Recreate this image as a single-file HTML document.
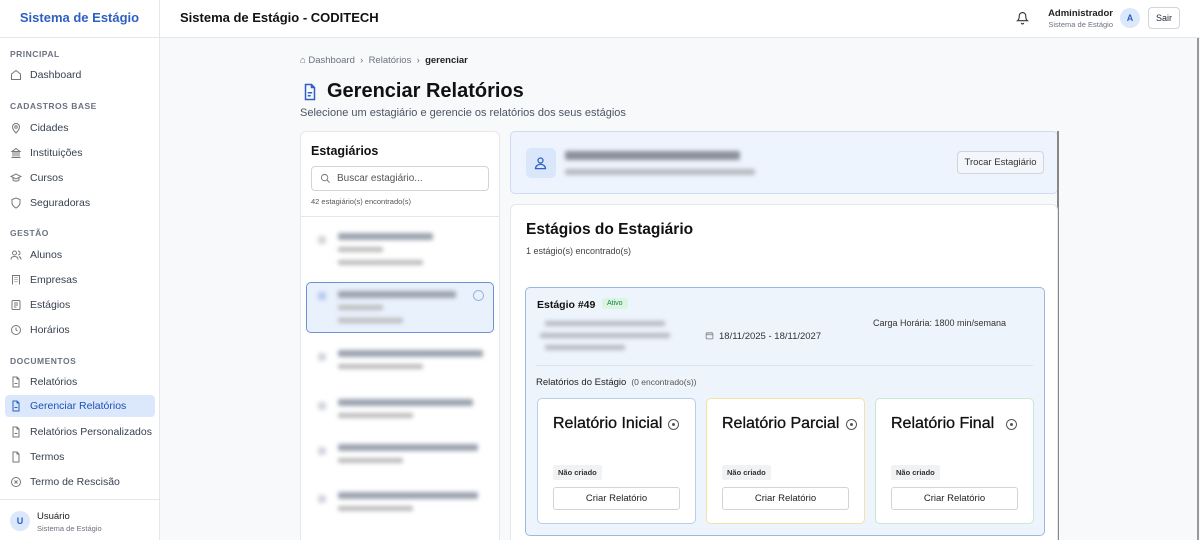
<!DOCTYPE html>
<html style="width:1200px;height:540px;overflow:hidden"><head><meta charset="utf-8"><style>
*{box-sizing:border-box;margin:0;padding:0}
body{width:1200px;height:540px;overflow:hidden;font-family:"Liberation Sans",sans-serif;background:#f8f9fb;color:#1f2937;position:relative}
.a{position:absolute}
.sec{position:absolute;left:10px;font-size:8.5px;font-weight:bold;color:#6b7280;letter-spacing:.5px}
.it{position:absolute;left:5px;width:150px;height:22px;border-radius:4px;font-size:10.5px;color:#374151;padding-left:25px;line-height:22px}
.it svg{position:absolute;left:5px;top:5px}
.it.on{background:#dbe8fb;color:#1e4fb5}
.blur{filter:blur(2px);background:#9ca3af;position:absolute;border-radius:2px}
.card{background:#fff;border:1px solid #e5e7eb;border-radius:6px;position:absolute}
.rc{position:absolute;top:398px;width:159px;height:126px;background:#fff;border-radius:5px}
.rc h3{position:absolute;left:15px;top:16px;font-size:16px;font-weight:normal;color:#111;-webkit-text-stroke:.3px #111}
.rc .x{position:absolute;right:16px;top:20px;width:11px;height:11px;border:1px solid #555;border-radius:50%}
.rc .x::after{content:"";position:absolute;left:3px;top:3px;width:3px;height:3px;background:#555;border-radius:50%}
.rc .nc{position:absolute;left:15px;top:66px;background:#f1f2f4;font-size:7.5px;font-weight:bold;padding:3px 5px;border-radius:2px;color:#333}
.rc .bt{position:absolute;left:15px;top:88px;width:127px;height:23px;border:1px solid #d1d5db;border-radius:3px;font-size:9.5px;text-align:center;line-height:21px;color:#222;background:#fff}
</style></head><body>
<div class="a" style="left:0;top:0;width:1200px;height:38px;background:#fff;border-bottom:1px solid #e5e7eb"></div>
<div class="a" style="left:0;top:0;width:160px;height:38px;border-right:1px solid #e5e7eb;text-align:center;line-height:36px;font-size:13px;font-weight:bold;color:#2d5fc4">Sistema de Estágio</div>
<div class="a" style="left:180px;top:10px;font-size:13px;font-weight:bold;color:#111">Sistema de Estágio - CODITECH</div>
<svg class="a" style="left:1016px;top:11px" width="13" height="14" viewBox="0 0 24 24" fill="none" stroke="#333" stroke-width="2"><path d="M6 8a6 6 0 0 1 12 0c0 7 3 9 3 9H3s3-2 3-9"/><path d="M10 21a2 2 0 0 0 4 0"/></svg>
<div class="a" style="left:1040px;top:8px;width:73px;text-align:right;font-size:9.5px;font-weight:bold;color:#222">Administrador</div>
<div class="a" style="left:1030px;top:20px;width:83px;text-align:right;font-size:7.5px;color:#6b7280">Sistema de Estágio</div>
<div class="a" style="left:1120px;top:8px;width:20px;height:20px;border-radius:50%;background:#dbe7fb;color:#2d5fc4;font-size:9px;font-weight:bold;text-align:center;line-height:20px">A</div>
<div class="a" style="left:1148px;top:7px;width:32px;height:22px;border:1px solid #d1d5db;border-radius:4px;font-size:9px;text-align:center;line-height:20px;background:#fff">Sair</div>
<div class="a" style="left:1197px;top:38px;width:2px;height:502px;background:#999"></div>
<div class="a" style="left:0;top:38px;width:160px;height:502px;background:#fff;border-right:1px solid #e5e7eb"></div>
<div class="sec" style="top:49px">PRINCIPAL</div>
<div class="it" style="top:64px"><svg width="12" height="12" viewBox="0 0 24 24" fill="none" stroke="#777" stroke-width="2"><path d="M3 10l9-7 9 7v11H3z"/></svg>Dashboard</div>
<div class="sec" style="top:101px">CADASTROS BASE</div>
<div class="it" style="top:117px"><svg width="12" height="12" viewBox="0 0 24 24" fill="none" stroke="#777" stroke-width="2"><path d="M12 22s7-7 7-12a7 7 0 0 0-14 0c0 5 7 12 7 12z"/><circle cx="12" cy="10" r="2.5"/></svg>Cidades</div>
<div class="it" style="top:142px"><svg width="12" height="12" viewBox="0 0 24 24" fill="none" stroke="#777" stroke-width="2"><path d="M3 21h18M4 9h16L12 3zM6 9v10M10 9v10M14 9v10M18 9v10"/></svg>Instituições</div>
<div class="it" style="top:167px"><svg width="12" height="12" viewBox="0 0 24 24" fill="none" stroke="#777" stroke-width="2"><path d="M2 9l10-5 10 5-10 5zM6 11v5c3 3 9 3 12 0v-5"/></svg>Cursos</div>
<div class="it" style="top:192px"><svg width="12" height="12" viewBox="0 0 24 24" fill="none" stroke="#777" stroke-width="2"><path d="M12 22s8-4 8-10V5l-8-3-8 3v7c0 6 8 10 8 10z"/></svg>Seguradoras</div>
<div class="sec" style="top:228px">GESTÃO</div>
<div class="it" style="top:244px"><svg width="12" height="12" viewBox="0 0 24 24" fill="none" stroke="#777" stroke-width="2"><circle cx="9" cy="8" r="4"/><path d="M2 21c0-4 3-6 7-6s7 2 7 6M16 4a4 4 0 0 1 0 8M22 21c0-3-2-5-4-6"/></svg>Alunos</div>
<div class="it" style="top:269px"><svg width="12" height="12" viewBox="0 0 24 24" fill="none" stroke="#777" stroke-width="2"><path d="M5 21V3h14v18M9 7h2M13 7h2M9 11h2M13 11h2M9 15h2M13 15h2"/></svg>Empresas</div>
<div class="it" style="top:294px"><svg width="12" height="12" viewBox="0 0 24 24" fill="none" stroke="#777" stroke-width="2"><rect x="4" y="3" width="16" height="18" rx="2"/><path d="M8 8h8M8 12h8M8 16h5"/></svg>Estágios</div>
<div class="it" style="top:319px"><svg width="12" height="12" viewBox="0 0 24 24" fill="none" stroke="#777" stroke-width="2"><circle cx="12" cy="12" r="9"/><path d="M12 7v5l3 2"/></svg>Horários</div>
<div class="sec" style="top:356px">DOCUMENTOS</div>
<div class="it" style="top:371px"><svg width="12" height="12" viewBox="0 0 24 24" fill="none" stroke="#777" stroke-width="2"><path d="M14 2H6v20h12V6zM14 2v4h4M9 15h6"/></svg>Relatórios</div>
<div class="it on" style="top:395px"><svg width="12" height="12" viewBox="0 0 24 24" fill="none" stroke="#2d5fc4" stroke-width="2"><path d="M14 2H6v20h12V6zM14 2v4h4M9 15h6"/></svg>Gerenciar Relatórios</div>
<div class="it" style="top:421px"><svg width="12" height="12" viewBox="0 0 24 24" fill="none" stroke="#777" stroke-width="2"><path d="M14 2H6v20h12V6zM14 2v4h4M9 15h6"/></svg>Relatórios Personalizados</div>
<div class="it" style="top:446px"><svg width="12" height="12" viewBox="0 0 24 24" fill="none" stroke="#777" stroke-width="2"><path d="M14 2H6v20h12V6zM14 2v4h4"/></svg>Termos</div>
<div class="it" style="top:471px"><svg width="12" height="12" viewBox="0 0 24 24" fill="none" stroke="#777" stroke-width="2"><circle cx="12" cy="12" r="9"/><path d="M9 9l6 6M15 9l-6 6"/></svg>Termo de Rescisão</div>
<div class="a" style="left:0;top:499px;width:160px;height:1px;background:#e5e7eb"></div>
<div class="a" style="left:10px;top:511px;width:20px;height:20px;border-radius:50%;background:#dbe7fb;color:#2d5fc4;font-size:9px;font-weight:bold;text-align:center;line-height:20px">U</div>
<div class="a" style="left:37px;top:511px;font-size:9.5px;color:#222">Usuário</div>
<div class="a" style="left:37px;top:524px;font-size:7.5px;color:#6b7280">Sistema de Estágio</div>
<div class="a" style="left:300px;top:55px;font-size:9.5px;color:#6b7280">⌂ Dashboard &nbsp;›&nbsp; Relatórios &nbsp;›&nbsp; <b style="color:#222">gerenciar</b></div>
<svg class="a" style="left:301px;top:82px" width="18" height="20" viewBox="0 0 24 24" fill="none" stroke="#2d5fc4" stroke-width="2"><path d="M14 2H6v20h12V6zM14 2v4h4M9 13h6M9 17h4"/></svg>
<div class="a" style="left:327px;top:80px;font-size:20px;font-weight:bold;color:#111">Gerenciar Relatórios</div>
<div class="a" style="left:300px;top:107px;font-size:11px;color:#4b5563">Selecione um estagiário e gerencie os relatórios dos seus estágios</div>
<div class="card" style="left:300px;top:131px;width:200px;height:415px"></div>
<div class="a" style="left:311px;top:144px;font-size:12.5px;font-weight:bold;color:#111">Estagiários</div>
<div class="a" style="left:311px;top:166px;width:178px;height:25px;border:1px solid #d1d5db;border-radius:4px;background:#fff;font-size:10px;color:#555;padding-left:25px;line-height:23px">Buscar estagiário...<svg style="position:absolute;left:8px;top:6px" width="11" height="11" viewBox="0 0 24 24" fill="none" stroke="#777" stroke-width="2"><circle cx="10" cy="10" r="7"/><path d="M15 15l6 6"/></svg></div>
<div class="a" style="left:311px;top:197px;font-size:7.5px;color:#555">42 estagiário(s) encontrado(s)</div>
<div class="a" style="left:301px;top:216px;width:198px;height:1px;background:#e5e7eb"></div>
<div class="a" style="left:306px;top:282px;width:188px;height:51px;background:#e9f1fd;border:1.5px solid #6b93d6;border-radius:5px"></div>
<div class="blur" style="left:318px;top:236px;width:8px;height:8px;background:#d1d5db"></div><div class="blur" style="left:338px;top:233px;width:95px;height:7px"></div><div class="blur" style="left:338px;top:247px;width:45px;height:5px;background:#bbb"></div><div class="blur" style="left:338px;top:260px;width:85px;height:5px;background:#bbb"></div>
<div class="blur" style="left:318px;top:292px;width:8px;height:8px;background:#b5c9ee"></div><div class="blur" style="left:338px;top:291px;width:118px;height:7px"></div><div class="blur" style="left:338px;top:305px;width:45px;height:5px;background:#bbb"></div><div class="blur" style="left:338px;top:318px;width:65px;height:5px;background:#bbb"></div>
<div class="a" style="left:473px;top:290px;width:11px;height:11px;border:1px solid #9bb4e0;border-radius:50%"></div>
<div class="blur" style="left:318px;top:353px;width:8px;height:8px;background:#d1d5db"></div><div class="blur" style="left:338px;top:350px;width:145px;height:7px"></div><div class="blur" style="left:338px;top:364px;width:85px;height:5px;background:#bbb"></div>
<div class="blur" style="left:318px;top:402px;width:8px;height:8px;background:#d1d5db"></div><div class="blur" style="left:338px;top:399px;width:135px;height:7px"></div><div class="blur" style="left:338px;top:413px;width:75px;height:5px;background:#bbb"></div>
<div class="blur" style="left:318px;top:447px;width:8px;height:8px;background:#d1d5db"></div><div class="blur" style="left:338px;top:444px;width:140px;height:7px"></div><div class="blur" style="left:338px;top:458px;width:65px;height:5px;background:#bbb"></div>
<div class="blur" style="left:318px;top:495px;width:8px;height:8px;background:#d1d5db"></div><div class="blur" style="left:338px;top:492px;width:140px;height:7px"></div><div class="blur" style="left:338px;top:506px;width:75px;height:5px;background:#bbb"></div>
<div class="a" style="left:510px;top:131px;width:548px;height:63px;background:#eef4fd;border:1px solid #cfdcf0;border-radius:5px"></div>
<div class="a" style="left:526px;top:148px;width:30px;height:30px;background:#dae6fa;border-radius:5px"></div>
<svg class="a" style="left:533px;top:155px" width="15" height="16" viewBox="0 0 24 24" fill="none" stroke="#2d5fc4" stroke-width="2"><circle cx="12" cy="8" r="4"/><path d="M4 21c0-4 4-7 8-7s8 3 8 7z"/></svg>
<div class="blur" style="left:565px;top:151px;width:175px;height:9px;background:#8a9099"></div>
<div class="blur" style="left:565px;top:169px;width:190px;height:6px;background:#b5b9c0"></div>
<div class="a" style="left:957px;top:151px;width:87px;height:23px;border:1px solid #d1d5db;border-radius:4px;background:#f3f6fb;font-size:9.5px;text-align:center;line-height:21px;color:#333">Trocar Estagiário</div>
<div class="a" style="left:1057px;top:131px;width:2px;height:409px;background:#888"></div>
<div class="card" style="left:510px;top:204px;width:548px;height:345px"></div>
<div class="a" style="left:526px;top:221px;font-size:15.5px;font-weight:bold;color:#111">Estágios do Estagiário</div>
<div class="a" style="left:526px;top:246px;font-size:9px;color:#444">1 estágio(s) encontrado(s)</div>
<div class="a" style="left:525px;top:287px;width:520px;height:249px;background:#eef4fc;border:1px solid #9bb8e0;border-radius:5px"></div>
<div class="a" style="left:537px;top:299px;font-size:10.5px;font-weight:bold;color:#111">Estágio #49</div>
<div class="a" style="left:602px;top:298px;background:#dcf5e3;color:#15803d;font-size:7px;padding:2px 5px;border-radius:3px">Ativo</div>
<div class="blur" style="left:545px;top:321px;width:120px;height:5px;background:#b5b9c0"></div>
<div class="blur" style="left:540px;top:333px;width:130px;height:5px;background:#b5b9c0"></div>
<div class="blur" style="left:545px;top:345px;width:80px;height:5px;background:#b5b9c0"></div>
<svg class="a" style="left:705px;top:331px" width="9" height="9" viewBox="0 0 24 24" fill="none" stroke="#777" stroke-width="2"><rect x="3" y="5" width="18" height="16" rx="2"/><path d="M3 10h18M8 3v4M16 3v4"/></svg>
<div class="a" style="left:719px;top:331px;font-size:9.5px;color:#333">18/11/2025 - 18/11/2027</div>
<div class="a" style="left:873px;top:318px;font-size:9px;color:#333">Carga Horária: 1800 min/semana</div>
<div class="a" style="left:536px;top:365px;width:497px;height:1px;background:#dde3ec"></div>
<div class="a" style="left:536px;top:377px;font-size:9.5px;color:#222">Relatórios do Estágio <span style="font-size:8.5px;color:#555">&nbsp;(0 encontrado(s))</span></div>
<div class="rc" style="left:537px;border:1.5px solid #b9cdec"><h3>Relatório Inicial</h3><div class="x"></div><div class="nc">Não criado</div><div class="bt">Criar Relatório</div></div>
<div class="rc" style="left:706px;border:1.5px solid #f4e2a2"><h3>Relatório Parcial</h3><div class="x" style="right:7px"></div><div class="nc">Não criado</div><div class="bt">Criar Relatório</div></div>
<div class="rc" style="left:875px;border:1.5px solid #c5ead0"><h3>Relatório Final</h3><div class="x"></div><div class="nc">Não criado</div><div class="bt">Criar Relatório</div></div>
</body></html>
